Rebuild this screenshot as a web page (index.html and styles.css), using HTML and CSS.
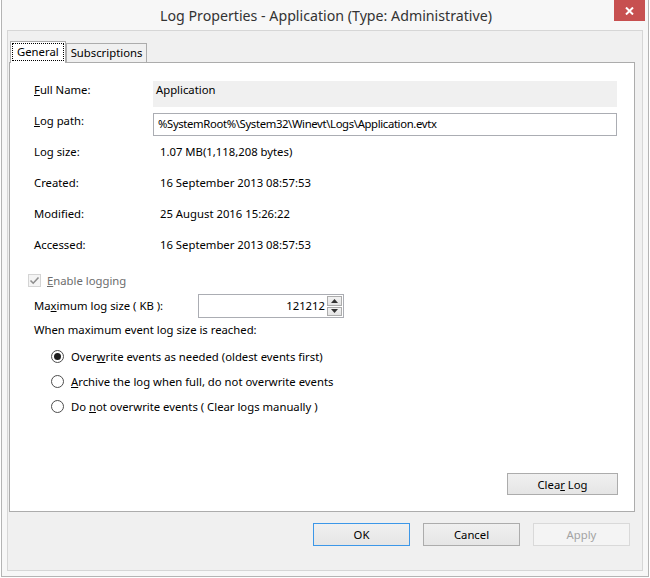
FILE: index.html
```html
<!DOCTYPE html>
<html lang="en">
<head>
    <meta charset="UTF-8">
    <title>Log Properties - Application (Type: Administrative)</title>
    <link rel="stylesheet" href="styles.css">
</head>
<body>
    <div class="window">
        <!-- Title bar -->
        <div class="titlebar">
            <span class="title">Log Properties - Application (Type: Administrative)</span>
            <span class="close-btn">
                <svg width="9" height="8" viewBox="0 0 9 8">
                    <path d="M1 0.5 L8 7.5 M8 0.5 L1 7.5" stroke="#fff" stroke-width="2"/>
                </svg>
            </span>
        </div>

        <div class="client">
            <!-- Tabs -->
            <div class="tabs">
                <div class="tab tab-active"><span class="focus">General</span></div>
                <div class="tab">Subscriptions</div>
            </div>

            <div class="tab-panel">
                <!-- Log file properties -->
                <div class="props">
                    <div class="label label-top"><u>F</u>ull Name:</div>
                    <div class="readonly">Application</div>

                    <div class="label label-path"><u>L</u>og path:</div>
                    <div class="textbox">%SystemRoot%\System32\Winevt\Logs\Application.evtx</div>

                    <div class="label row">Log size:</div>
                    <div class="value row">1.07 MB(1,118,208 bytes)</div>

                    <div class="label row">Created:</div>
                    <div class="value row">16 September 2013 08:57:53</div>

                    <div class="label row">Modified:</div>
                    <div class="value row">25 August 2016 15:26:22</div>

                    <div class="label row">Accessed:</div>
                    <div class="value row">16 September 2013 08:57:53</div>
                </div>

                <!-- Logging options -->
                <div class="check disabled">
                    <span class="checkbox">
                        <svg width="13" height="13" viewBox="0 0 13 13">
                            <rect x="0.5" y="0.5" width="12" height="12" fill="#f4f4f4" stroke="#d4d4d4"/>
                            <path d="M2.5 6.5 L5.2 9.2 L10.5 3.5" fill="none" stroke="#8e8e8e" stroke-width="1.6"/>
                        </svg>
                    </span>
                    <span><u>E</u>nable logging</span>
                </div>

                <div class="max-size">
                    <span class="max-label">Ma<u>x</u>imum log size ( KB ):</span>
                    <div class="spinner">
                        <span class="spin-value">121212</span>
                        <span class="spin-buttons">
                            <span class="spin-btn">
                                <svg width="7" height="4" viewBox="0 0 7 4"><path d="M0 4 L3.5 0 L7 4 Z" fill="#333"/></svg>
                            </span>
                            <span class="spin-btn">
                                <svg width="7" height="4" viewBox="0 0 7 4"><path d="M0 0 L3.5 4 L7 0 Z" fill="#333"/></svg>
                            </span>
                        </span>
                    </div>
                </div>

                <div class="when">When maximum event log size is reached:</div>

                <div class="radios">
                    <div class="radio-row">
                        <span class="radio radio-on"></span>
                        <span>Over<u>w</u>rite events as needed (oldest events first)</span>
                    </div>
                    <div class="radio-row">
                        <span class="radio"></span>
                        <span><u>A</u>rchive the log when full, do not overwrite events</span>
                    </div>
                    <div class="radio-row">
                        <span class="radio"></span>
                        <span>Do <u>n</u>ot overwrite events ( Clear logs manually )</span>
                    </div>
                </div>

                <div class="panel-actions">
                    <button class="btn btn-clear">Clea<u>r</u> Log</button>
                </div>
            </div>

            <!-- Dialog buttons -->
            <div class="dialog-buttons">
                <button class="btn btn-dialog btn-default">OK</button>
                <button class="btn btn-dialog">Cancel</button>
                <button class="btn btn-dialog" disabled>Apply</button>
            </div>
        </div>
    </div>
</body>
</html>
```

FILE: styles.css
```css
* {
    margin: 0;
    padding: 0;
    box-sizing: border-box;
}

body {
    background-color: #fff;
    font-family: 'Noto Sans', 'Open Sans', sans-serif;
    font-size: 11.3px;
    color: #000;
}

u {
    text-decoration: underline;
    text-underline-offset: 1px;
}

.window {
    width: 648px;
    height: 577px;
    margin-left: 1px;
    background-color: #f7f7f7;
    border: 1px solid #b4b4b4;
    border-top: none;
    display: flex;
    flex-direction: column;
}

/* Title bar */
.titlebar {
    height: 30px;
    position: relative;
    display: flex;
    align-items: center;
    justify-content: center;
    padding-left: 2px;
}

.title {
    font-size: 14.2px;
    color: #333;
    margin-top: 1px;
}

.close-btn {
    position: absolute;
    top: 0;
    right: 3px;
    width: 31px;
    height: 21px;
    background-color: #c75050;
    display: flex;
    align-items: center;
    justify-content: center;
}

/* Client area */
.client {
    flex: 1;
    margin: 0 5px 5px 5px;
    background-color: #f0f0f0;
    border: 1px solid #d6d6d6;
    padding: 10px 7px 0 1px;
    display: flex;
    flex-direction: column;
}

.tabs {
    display: flex;
    align-items: flex-end;
    height: 22px;
    margin-bottom: -1px;
    position: relative;
    z-index: 1;
}

.tab {
    height: 19px;
    margin-bottom: 1px;
    padding: 0 4px;
    border: 1px solid #acacac;
    border-bottom: none;
    background-color: #f0f0f0;
    line-height: 17px;
    white-space: nowrap;
}

.tab-active {
    height: 22px;
    margin-bottom: 0;
    margin-left: 1px;
    padding: 1px 1px 0 1px;
    background-color: #fff;
    line-height: 16px;
}

.focus {
    display: block;
    padding: 0 4px;
    border: 1px dotted #000;
    height: 18px;
}

.tab-panel {
    height: 450px;
    background-color: #fff;
    border: 1px solid #acacac;
    display: flex;
    flex-direction: column;
    padding: 18px 16px 16px 0;
}

/* Property grid */
.props {
    display: grid;
    grid-template-columns: 143px 1fr;
    padding-right: 1px;
}

.label {
    padding-left: 24px;
}

.label-top {
    padding-top: 1px;
}

.readonly {
    height: 26px;
    background-color: #f0f0f0;
    padding: 1px 3px 0 3px;
}

.label-path {
    margin-top: 6px;
}

.textbox {
    margin-top: 6px;
    height: 23px;
    border: 1px solid #abadb3;
    padding: 2px 3px 0 4px;
    white-space: nowrap;
    letter-spacing: -0.35px;
}

.row {
    height: 31px;
    line-height: 31px;
}

.value {
    padding-left: 7px;
}

/* Logging options */
.check {
    display: flex;
    align-items: center;
    gap: 6px;
    height: 15px;
    margin-top: 13px;
    padding-left: 18px;
}

.disabled {
    color: #6d6d6d;
}

.checkbox {
    display: flex;
}

.max-size {
    display: flex;
    align-items: center;
    margin-top: 6px;
    padding-left: 24px;
}

.max-label {
    width: 164px;
    margin-top: -2px;
}

.spinner {
    width: 146px;
    height: 24px;
    border: 1px solid #abadb3;
    display: flex;
    justify-content: flex-end;
    align-items: center;
    padding: 1px;
}

.spin-value {
    margin-right: 2px;
    margin-top: -1px;
}

.spin-buttons {
    display: flex;
    flex-direction: column;
    gap: 1px;
    height: 100%;
}

.spin-btn {
    flex: 1;
    width: 15px;
    border: 1px solid #acacac;
    background: linear-gradient(#f2f2f2, #e4e4e4);
    display: flex;
    align-items: center;
    justify-content: center;
}

.when {
    height: 15px;
    line-height: 15px;
    margin-top: 4px;
    padding-left: 24px;
}

.radios {
    margin-top: 7px;
    padding-left: 41px;
}

.radio-row {
    display: flex;
    align-items: center;
    gap: 7px;
    height: 25px;
}

.radio {
    width: 13px;
    height: 13px;
    border: 1px solid #4d4d4d;
    border-radius: 50%;
    background-color: #fff;
    display: flex;
    align-items: center;
    justify-content: center;
}

.radio-on::after {
    content: "";
    width: 7px;
    height: 7px;
    border-radius: 50%;
    background-color: #1e1e1e;
}

.panel-actions {
    margin-top: auto;
    display: flex;
    justify-content: flex-end;
}

/* Buttons */
.btn {
    font-family: inherit;
    font-size: 11.3px;
    color: #000;
    border: 1px solid #acacac;
    background: linear-gradient(#f0f0f0, #e5e5e5);
}

.btn-clear {
    width: 111px;
    height: 22px;
}

.dialog-buttons {
    display: flex;
    justify-content: flex-end;
    gap: 13px;
    margin-top: 11px;
    padding-right: 5px;
}

.btn-dialog {
    width: 97px;
    height: 23px;
}

.btn-default {
    border-color: #3c97e8;
}

.btn:disabled {
    color: #a3a3a3;
    border-color: #d9d9d9;
    background: #f4f4f4;
}
```
